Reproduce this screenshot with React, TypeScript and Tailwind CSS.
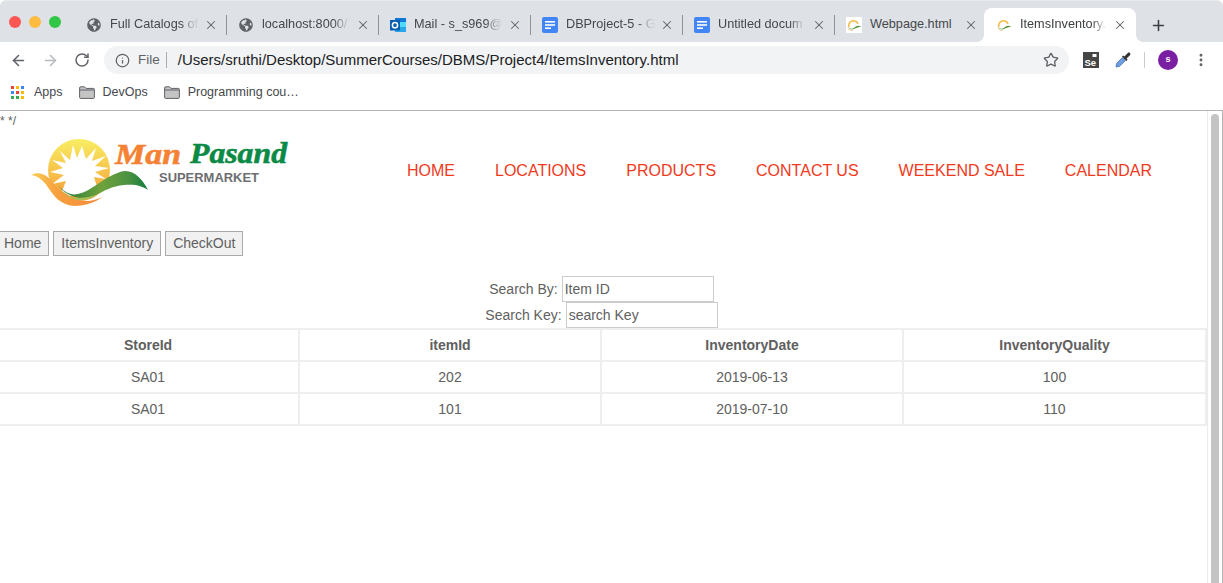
import React from 'react';
import { ArrowLeft, ArrowRight, RotateCw, Info, Star, Plus, X, EllipsisVertical } from 'lucide-react';
import { FaGlobeAmericas } from 'react-icons/fa';

const GlobeIcon = () => <FaGlobeAmericas className="w-[14px] h-[14px] text-[#5f6368]" />;

const DocsIcon = () => (
  <svg width="16" height="16" viewBox="0 0 16 16">
    <rect width="16" height="16" rx="2" fill="#4285f4" />
    <rect x="3" y="4" width="10" height="1.6" fill="#fff" />
    <rect x="3" y="7.2" width="10" height="1.6" fill="#fff" />
    <rect x="3" y="10.4" width="6" height="1.6" fill="#fff" />
  </svg>
);

const OutlookIcon = () => (
  <svg width="16" height="16" viewBox="0 0 16 16">
    <rect x="5" y="1" width="11" height="14" fill="#28a8ea" />
    <rect x="5" y="1" width="11" height="4" fill="#0f78d4" />
    <rect x="10" y="5" width="6" height="5" fill="#50d9ff" />
    <rect x="0" y="3" width="10" height="10.5" fill="#0a5fb4" />
    <circle cx="5" cy="8.2" r="2.6" fill="none" stroke="#fff" strokeWidth="1.5" />
  </svg>
);

const LogoFavicon = ({ bg }: { bg?: boolean }) => (
  <svg width="16" height="16" viewBox="0 0 16 16">
    {bg && <rect width="16" height="16" fill="#fff" />}
    <path d="M3 10 A4.6 4.6 0 1 1 12 7" fill="none" stroke="#f6bd4a" strokeWidth="1.6" />
    <path d="M1 9 C4 12.5 6 12.5 9 10 C11 8.5 13 8.5 15.5 9.6 C12 10 10 11.5 8 12 C5 13 3 12 1 9Z" fill="#5c9a3c" />
    <path d="M1 9.5 C3 13 5 14 8 13 C5 14.5 2.5 13.5 1 9.5Z" fill="#f59a3e" />
  </svg>
);

const tabs = [
  { title: 'Full Catalogs of', icon: <GlobeIcon />, fade: true },
  { title: 'localhost:8000/', icon: <GlobeIcon />, fade: true },
  { title: 'Mail - s_s969@', icon: <OutlookIcon />, fade: true },
  { title: 'DBProject-5 - G', icon: <DocsIcon />, fade: true },
  { title: 'Untitled docum', icon: <DocsIcon />, fade: true },
  { title: 'Webpage.html', icon: <LogoFavicon bg />, fade: false },
];

const TabStrip = () => (
  <div className="flex h-[42px] shrink-0 bg-[#dee1e6] border-t border-[#e9e9e9] rounded-t-md">
    <div className="flex w-[75px] items-center gap-2 pl-[9px] pb-[1px] pt-[1px]">
      <span className="w-3 h-3 rounded-full bg-[#fc5753]" />
      <span className="w-3 h-3 rounded-full bg-[#fdbc40]" />
      <span className="w-3 h-3 rounded-full bg-[#33c748]" />
    </div>
    {tabs.map((t) => (
      <div key={t.title} className="w-[152px] flex items-center pt-[7px]">
        <div className="flex flex-1 items-center pl-[11px] pr-[7px]">
          <span className="w-4 flex justify-center shrink-0">{t.icon}</span>
          <span
            className={
              t.fade
                ? 'ml-[8px] w-[92px] whitespace-nowrap text-[12.7px] text-[#45484c] [mask-image:linear-gradient(to_right,black_78%,rgba(0,0,0,0.25)_90%,transparent_98%)]'
                : 'ml-[8px] w-[92px] whitespace-nowrap text-[12.7px] text-[#45484c]'
            }
          >
            {t.title}
          </span>
          <X className="ml-[2px] w-[14px] h-[14px] text-[#5f6368]" strokeWidth={1.8} />
        </div>
        <span className="w-px h-5 bg-[#8f9296]" />
      </div>
    ))}
    <div className="relative -ml-[3px] mt-[7px] w-[152px] h-[34px] bg-white rounded-t-lg flex items-center pl-[12px] pr-[8px]">
      <span className="absolute bottom-0 -left-2 w-2 h-2 bg-[radial-gradient(circle_at_0_0,transparent_8px,white_8px)]" />
      <span className="absolute bottom-0 -right-2 w-2 h-2 bg-[radial-gradient(circle_at_100%_0,transparent_8px,white_8px)]" />
      <span className="w-4 shrink-0"><LogoFavicon /></span>
      <span className="ml-[8px] w-[92px] whitespace-nowrap text-[12.7px] text-[#3c4043] [mask-image:linear-gradient(to_right,black_78%,rgba(0,0,0,0.25)_90%,transparent_98%)]">
        ItemsInventory.
      </span>
      <X className="ml-[1px] w-[14px] h-[14px] text-[#5f6368]" strokeWidth={1.8} />
    </div>
    <div className="ml-[14px] pt-[7px] flex items-center">
      <Plus className="w-[17px] h-[17px] text-[#3c4043]" strokeWidth={2.2} />
    </div>
  </div>
);

const Toolbar = () => (
  <div className="flex h-[32px] shrink-0 items-end bg-white">
    <div className="flex w-[104px] h-[28px] items-center pl-[10px] gap-[15px]">
      <ArrowLeft className="w-[17px] h-[17px] text-[#5f6368]" strokeWidth={2.2} />
      <ArrowRight className="w-[17px] h-[17px] text-[#b8babd]" strokeWidth={2.2} />
      <RotateCw className="w-4 h-4 text-[#5f6368]" strokeWidth={2.2} />
    </div>
    <div className="flex w-[965px] h-[28px] items-center rounded-full bg-[#f1f3f4] pl-[11px] pr-[10px]">
      <Info className="w-[15px] h-[15px] text-[#5f6368]" strokeWidth={2} />
      <span className="ml-[8px] text-[13.5px] text-[#5f6368]">File</span>
      <span className="ml-[6px] w-px h-4 bg-[#a8abaf]" />
      <span className="ml-[11px] flex-1 pt-[1px] text-[15px] text-[#202124]">
        /Users/sruthi/Desktop/SummerCourses/DBMS/Project4/ItemsInventory.html
      </span>
      <Star className="w-4 h-4 text-[#5f6368]" strokeWidth={2} />
    </div>
    <div className="flex h-[28px] items-center pl-[14px]">
      <svg width="16" height="16" viewBox="0 0 16 16">
        <rect width="16" height="16" fill="#454545" />
        <rect x="9.5" y="2" width="4" height="3" fill="#fff" />
        <text x="1.5" y="13.5" fontSize="9.5" fontWeight="700" fill="#fff" fontFamily="Liberation Sans">Se</text>
      </svg>
      <svg className="ml-[16px]" width="16" height="16" viewBox="0 0 16 16">
        <path d="M1 15 L1.6 11.6 L7.4 5.6 L10.4 8.6 L4.4 14.4 Z" fill="#6f9fe0" stroke="#3c6fb8" strokeWidth="0.8" />
        <path d="M7 4.6 L11.4 9 L12.6 7.8 L11.6 6.6 L15 3.2 C16.2 1.5 14.5 -0.2 12.8 1 L9.4 4.4 L8.2 3.4 Z" fill="#333" />
      </svg>
      <span className="ml-[13px] w-px h-4 bg-[#c8cacd]" />
      <span className="ml-[13px] w-5 h-5 rounded-full bg-[#7b1fa2] text-white text-[9px] font-bold flex items-center justify-center">s</span>
      <EllipsisVertical className="ml-[15px] w-4 h-4 text-[#5f6368]" strokeWidth={2.4} />
    </div>
  </div>
);

const FolderIcon = () => (
  <svg width="16" height="13" viewBox="0 0 16 13">
    <path d="M0.6 2 Q0.6 0.8 1.8 0.8 H5.5 L7 2.4 H14.4 Q15.4 2.4 15.4 3.4 V11.4 Q15.4 12.4 14.4 12.4 H1.6 Q0.6 12.4 0.6 11.4 Z" fill="#c4c4c4" stroke="#5f6368" strokeWidth="1" />
    <path d="M0.6 4 H15.4" stroke="#5f6368" strokeWidth="1" />
  </svg>
);

const AppsIcon = () => {
  const colors = ['#ea4335', '#fbbc05', '#4285f4', '#4285f4', '#ea4335', '#fbbc05', '#34a853', '#34a853', '#fbbc05'];
  return (
    <div className="grid grid-cols-3 gap-[2px] w-[13px]">
      {colors.map((c, i) => (
        <svg key={i} width="3" height="3" viewBox="0 0 3 3"><rect width="3" height="3" fill={c} /></svg>
      ))}
    </div>
  );
};

const Bookmarks = () => (
  <div className="flex h-[37px] shrink-0 items-center bg-white border-b border-[#b4b4b4] pl-[11px] text-[12.5px] text-[#45484c]">
    <AppsIcon />
    <span className="ml-[10px]">Apps</span>
    <span className="ml-[16px]"><FolderIcon /></span>
    <span className="ml-[8px]">DevOps</span>
    <span className="ml-[16px]"><FolderIcon /></span>
    <span className="ml-[8px]">Programming cou…</span>
  </div>
);

const Logo = () => (
  <svg width="260" height="76" viewBox="30 134 260 76" className="shrink-0">
    <defs>
      <linearGradient id="sun" x1="0" y1="0" x2="0" y2="1">
        <stop offset="0" stopColor="#f8ee62" />
        <stop offset="1" stopColor="#f59b38" />
      </linearGradient>
      <linearGradient id="leaf" x1="0" y1="0" x2="1" y2="0">
        <stop offset="0" stopColor="#17763a" />
        <stop offset="0.5" stopColor="#6fa23e" />
        <stop offset="0.8" stopColor="#4a9140" />
        <stop offset="1" stopColor="#0f7c3e" />
      </linearGradient>
      <linearGradient id="swoosh" x1="0" y1="0" x2="1" y2="0">
        <stop offset="0" stopColor="#f9cf56" />
        <stop offset="0.35" stopColor="#f7a03e" />
        <stop offset="1" stopColor="#f58a3c" />
      </linearGradient>
    </defs>
    <circle cx="79" cy="170" r="31" fill="url(#sun)" />
    <polygon
      fill="#fff"
      points="82,146 86,159 96,148 92,161 106,156 95,166 109,168 95,172 106,179 94,177 98,190 70,196 62,191 66,181 52,184 64,175 50,172 63,168 52,160 66,163 60,151 70,160 73,145 77,158"
    />
    <circle cx="79" cy="172" r="14" fill="#fff" />
    <path d="M55 182 C62 191 70 196 78 194 C92 191 102 178 120 172 C132 168 142 178 148 190 C142 186 136 184 124 185 C112 186 104 191 96 195 C84 200 68 200 55 182Z" fill="url(#leaf)" />
    <path d="M60 190 C70 200 84 200 98 194 C92 199 84 201 76 200 C70 199 64 195 60 190Z" fill="#a4bf55" />
    <path d="M31 175 C39 171 47 174 54 184 C62 195 74 201 86 201 C92 201 98 199 103 197 C94 203 84 206 74 206 C60 205 54 196 47 186 C43 180 38 176 31 175Z" fill="url(#swoosh)" />
    <text x="115" y="164" textLength="66" lengthAdjust="spacingAndGlyphs" fontFamily="Liberation Serif" fontStyle="italic" fontWeight="700" fontSize="30" fill="#f58233" stroke="#f58233" strokeWidth="0.6">Man</text>
    <text x="190" y="163" textLength="97" lengthAdjust="spacingAndGlyphs" fontFamily="Liberation Serif" fontStyle="italic" fontWeight="700" fontSize="30" fill="#0b8a46" stroke="#0b8a46" strokeWidth="0.6">Pasand</text>
    <text x="159" y="182" textLength="100" lengthAdjust="spacingAndGlyphs" fontFamily="Liberation Sans" fontWeight="700" fontSize="12" fill="#6d6e71">SUPERMARKET</text>
  </svg>
);

const navItems = ['HOME', 'LOCATIONS', 'PRODUCTS', 'CONTACT US', 'WEEKEND SALE', 'CALENDAR'];
const rows = [
  ['SA01', '202', '2019-06-13', '100'],
  ['SA01', '101', '2019-07-10', '110'],
];

const Page = () => (
  <div className="flex flex-1 min-h-0 bg-white font-['Liberation_Sans',sans-serif] border-r border-[#b4b4b4]">
    <main className="w-[1207px] shrink-0 overflow-hidden text-[#606060]">
      <div className="h-[23px] pt-[3px] text-[12px] leading-[14px]">* */</div>
      <header className="flex h-[76px] items-center pl-[30px]">
        <Logo />
        <nav className="ml-[117px] mb-[3px] flex gap-[40px] text-[16px] text-[#f1391c]">
          {navItems.map((n) => <a key={n}>{n}</a>)}
        </nav>
      </header>
      <div className="mt-[21px] flex gap-1 -ml-[4px] text-[14px]">
        {['Home', 'ItemsInventory', 'CheckOut'].map((b) => (
          <button key={b} className="h-[25px] px-[7px] border border-[#a9a9a9] bg-[#f1f1f1] text-[#606060]">{b}</button>
        ))}
      </div>
      <div className="mt-[20px] pr-[4px] flex flex-col items-center text-[14px]">
        <div className="flex h-[26px] items-baseline gap-1">
          <label>Search By:</label>
          <input readOnly value="Item ID" className="w-[152px] h-[26px] border border-[#ccc] px-[2px] text-[#606060] outline-none" />
        </div>
        <div className="flex h-[26px] items-baseline gap-1">
          <label>Search Key:</label>
          <input readOnly placeholder="search Key" className="w-[152px] h-[26px] border border-[#ccc] px-[2px] placeholder:text-[#606060] outline-none" />
        </div>
      </div>
      <table className="-ml-1 w-[1211px] table-fixed border-separate border-spacing-[2px] bg-[#eee] text-[14px]">
        <colgroup>
          <col className="w-[300px]" />
          <col className="w-[300px]" />
          <col className="w-[300px]" />
          <col className="w-[301px]" />
        </colgroup>
        <thead>
          <tr>
            {['StoreId', 'itemId', 'InventoryDate', 'InventoryQuality'].map((h) => (
              <th key={h} className="h-[30px] bg-white font-bold text-center">{h}</th>
            ))}
          </tr>
        </thead>
        <tbody>
          {rows.map((r, i) => (
            <tr key={i}>
              {r.map((c, j) => <td key={j} className="h-[30px] bg-white text-center">{c}</td>)}
            </tr>
          ))}
        </tbody>
      </table>
    </main>
    <div className="flex-1 flex justify-center border-l border-[#ececec] pt-[3px]">
      <div className="w-2 h-full bg-[#c4c4c4] rounded-t-full" />
    </div>
  </div>
);

export default function App() {
  return (
    <div className="flex h-screen flex-col overflow-hidden bg-white font-['Liberation_Sans',sans-serif]">
      <TabStrip />
      <Toolbar />
      <Bookmarks />
      <Page />
    </div>
  );
}
